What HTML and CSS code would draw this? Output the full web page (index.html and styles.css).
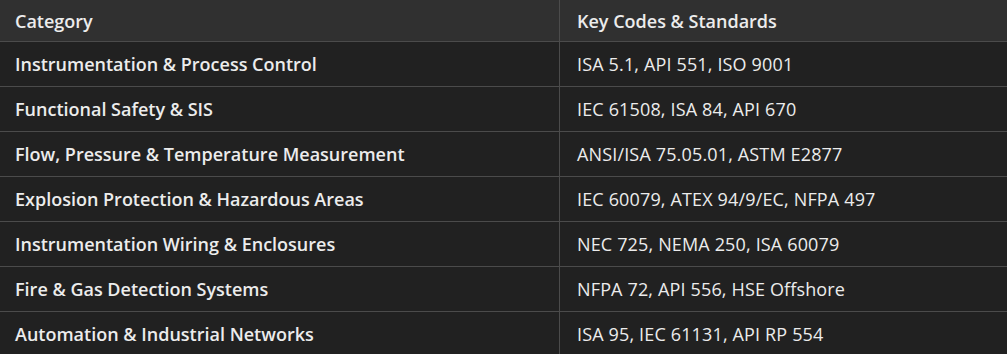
FILE: index.html
```html
<!DOCTYPE html>
<html>
<head>
<meta charset="utf-8">
<link rel="stylesheet" href="styles.css">
</head>
<body>
<table class="codes">
  <thead>
    <tr><th class="cat">Category</th><th class="std">Key Codes &amp; Standards</th></tr>
  </thead>
  <tbody>
    <tr><td class="cat">Instrumentation &amp; Process Control</td><td class="std">ISA 5.1, API 551, ISO 9001</td></tr>
    <tr><td class="cat">Functional Safety &amp; SIS</td><td class="std">IEC 61508, ISA 84, API 670</td></tr>
    <tr><td class="cat">Flow, Pressure &amp; Temperature Measurement</td><td class="std">ANSI/ISA 75.05.01, ASTM E2877</td></tr>
    <tr><td class="cat">Explosion Protection &amp; Hazardous Areas</td><td class="std">IEC 60079, ATEX 94/9/EC, NFPA 497</td></tr>
    <tr><td class="cat">Instrumentation Wiring &amp; Enclosures</td><td class="std">NEC 725, NEMA 250, ISA 60079</td></tr>
    <tr><td class="cat">Fire &amp; Gas Detection Systems</td><td class="std">NFPA 72, API 556, HSE Offshore</td></tr>
    <tr><td class="cat">Automation &amp; Industrial Networks</td><td class="std">ISA 95, IEC 61131, API RP 554</td></tr>
  </tbody>
</table>
</body>
</html>
```
FILE: styles.css
```css
html, body {
  margin: 0;
  padding: 0;
  background: #212121;
}
body {
  font-family: "Open Sans", "Noto Sans", sans-serif;
  color: #ececec;
  overflow: hidden;
}
.codes {
  width: 1007px;
  border-collapse: collapse;
  table-layout: fixed;
}
.codes th, .codes td {
  text-align: left;
  padding: 0 0 0 17px;
  font-size: 18px;
  line-height: 24px;
  border-bottom: 1px solid #4b4b4b;
}
.codes th {
  height: 41px;
  background: #303030;
  font-weight: 600;
}
.codes td {
  height: 44px;
}
.codes .cat {
  width: 544px;
  font-weight: 600;
  padding-left: 15px;
  border-right: 1px solid #4b4b4b;
}
.codes td.std {
  font-weight: 400;
  letter-spacing: 0.15px;
}
.codes th.std {
  font-weight: 600;
}
```
